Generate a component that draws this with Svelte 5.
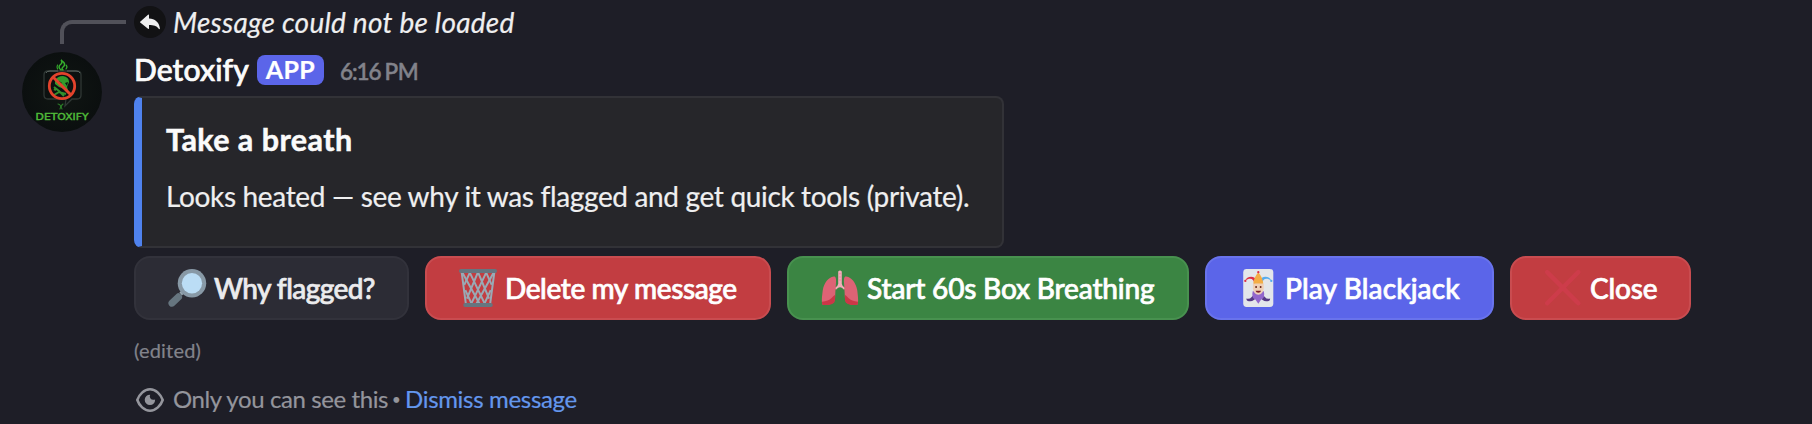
<script>
  const buttons = [
    { label: 'Why flagged?', kind: 'secondary', icon: 'search', width: 275, spacing: -0.58 },
    { label: 'Delete my message', kind: 'danger', icon: 'basket', width: 346, spacing: -0.4 },
    { label: 'Start 60s Box Breathing', kind: 'success', icon: 'lungs', width: 402, spacing: -0.18 },
    { label: 'Play Blackjack', kind: 'primary', icon: 'joker', width: 289, spacing: 0.12 },
    { label: 'Close', kind: 'danger', icon: 'cross', width: 181, spacing: -0.2 }
  ];
</script>

<article class="message">
  <div class="gutter">
    <div class="spine"></div>
    <svg class="avatar" viewBox="0 0 80 80" role="img" aria-label="Detoxify">
      <defs>
        <radialGradient id="face"><stop offset="0" stop-color="#101613" /><stop offset="1" stop-color="#0b0f0f" /></radialGradient>
      </defs>
      <circle cx="40" cy="40" r="40" fill="url(#face)" />
      <path d="M26 19h29q4 0 4 4v20q0 4-4 4h-5l-7 7 1-7H26q-4 0-4-4V23q0-4 4-4z" fill="#0c1110" stroke="#303835" stroke-width="1.3" />
      <path d="M24 21q1-2 4-2h8m9 0h9q3 0 4 2" fill="none" stroke="#69746f" stroke-width=".8" />
      <g fill="none" stroke="#35ad2d" stroke-linecap="round">
        <path d="M39 18q-4-3 0-6 2-2 0-4 6 4 2 7-2 2 0 3" stroke-width="1.5" />
        <path d="M35.500 17q-1-2 0-4M44 17q2-2 0-4" stroke-width="1.1" />
        <path d="M36 52q4 1 2 5m3-5q-3 2-1 5" stroke-width="1.1" stroke="#2b7d27" />
      </g>
      <path d="M33 29q2-5 8-5 6 1 6 6l-2 5 1 3-4-1-5-2-4-3z" fill="#329b2b" />
      <path d="M37 29l3 2-3 2zM43 31l3-1-1 4z" fill="#0c1711" />
      <path d="M32 35l5 4 5 5M32 43l5-3 7 2M34 38l-2-1" stroke="#338f2c" stroke-width="2" fill="none" />
      <circle cx="40" cy="34" r="12.700" fill="none" stroke="#e2432c" stroke-width="2.800" />
      <path d="M31 25l18 18" stroke="#e2432c" stroke-width="3" />
      <text x="13.600" y="68" textLength="53" lengthAdjust="spacingAndGlyphs">DETOXIFY</text>
    </svg>
  </div>

  <div class="content">
    <div class="reply">
      <span class="reply-icon">
        <svg viewBox="0 0 32 32"><path d="M6.200 15.800L14 8.700q1-.8 1 .5v3.300c6 .4 10 3.400 10.900 9.800.1 1-.7 1.100-1.200.4-2.200-3-5-3.700-9.700-3.700v3.300q0 1.300-1 .5L6.200 16.400q-.4-.3 0-.6z" fill="#efeff0" /></svg>
      </span>
      <em>Message could not be loaded</em>
    </div>

    <header>
      <span class="name">Detoxify</span>
      <span class="badge">APP</span>
      <time><span>6:16</span><span class="pm">PM</span></time>
    </header>

    <section class="embed">
      <h3>Take a breath</h3>
      <p>Looks heated — see why it was flagged and get quick tools (private).</p>
    </section>

    <div class="actions">
      {#each buttons as b}
        <button class={b.kind} style:width="{b.width}px">
          <svg class="emoji" viewBox="0 0 36 36">
            {#if b.icon === 'search'}
              <path d="M10.800 22.200l3-2.600 2.400 2.400-3 3z" fill="#9aaab4" />
              <path d="M1.300 34.700q-2.200-2.500.2-4.900l6.800-6.400q1.500-1.200 3.400.1l1.300 1.400q1.200 1.700 0 3.200l-6.700 6.500q-2.600 2.400-5 .1z" fill="#66757f" />
              <circle cx="22.700" cy="13.500" r="13.500" fill="#8899a6" />
              <circle cx="22.700" cy="13.500" r="9.600" fill="#bbddf5" />
            {:else if b.icon === 'basket'}
              <g fill="none" stroke="#99aab5" stroke-width="1.900">
                <path d="M2.500 3l4 30M33.500 3l-4 30" />
                <path d="M3 3l16.500 30M10 3l14.500 30M18 3l10.500 25M25.500 3L31 15" />
                <path d="M33 3L16.500 33M26 3L11.500 33M18 3L7.500 28M10.500 3L5 15" />
                <path d="M6 20l6 13M30 20l-6 13" />
              </g>
              <rect x="0" y="0" width="36" height="3.800" rx="1.900" fill="#66757f" />
              <rect x="4" y="32.200" width="28" height="3.800" rx="1.900" fill="#66757f" />
            {:else if b.icon === 'lungs'}
              <path d="M16.300 2.400q1.700-2 3.400 0V14q0 2 3.300 4l-1.100 1.600q-2.400-2.200-3.900-2.200t-3.900 2.200L13 18q3.300-2 3.300-4z" fill="#f4abba" />
              <path d="M16.500 4.500h3M16.500 7.500h3M16.500 10.500h3" stroke="#ea8fa2" stroke-width="1" />
              <path d="M12 7.200c2-.5 2.500 2 2.200 6-.3 4-.6 9-.9 15C13 34 5 34.500 2 34c-2-.4-1-8.500-.3-14C3 13 7 8 12 7.200zM24 7.200c-2-.5-2.500 2-2.200 6 .3 4 .6 9 .9 15 .3 5.800 8.300 6.300 11.300 5.800 2-.4 1-8.500.3-14C33 13 29 8 24 7.200z" fill="#dd6375" />
              <path d="M1 31q6-.3 9-3.500 2-2 3.500-3L13.200 30q-.6 4.500-11 4.200Q.7 34 1 31zM35 31q-6-.3-9-3.500-2-2-3.500-3l.3 5.500q.6 4.500 11 4.200Q35.300 34 35 31z" fill="#cc3747" />
            {:else if b.icon === 'joker'}
              <rect x="4" y="0" width="28.500" height="36" rx="3.200" fill="#e3e6ea" />
              <path d="M14.500 14C14.500 10 11 7.500 6 11c1-4 9-6 11 1z" fill="#dd2e44" />
              <path d="M22 14c0-4 3.500-6.500 8.500-3-1-4-9-6-11 1z" fill="#55acee" />
              <path d="M13.500 14Q14 8 18.300 3q4.200 5 4.700 11z" fill="#f4ad45" />
              <circle cx="18.300" cy="3" r="1.100" fill="#dd2e44" /><circle cx="6" cy="11.300" r="1.100" fill="#dd2e44" /><circle cx="30.600" cy="11.300" r="1.100" fill="#55acee" />
              <path d="M17 26q-3 5-7 4.500-3 .3-3-2.500 3 1 5-1.500l2-2zM19.500 26q3 5 7 4.500 3 .3 3-2.500-3 1-5-1.500l-2-2z" fill="#553986" />
              <path d="M13 21h10.500q1.500 6-2.500 8l-2.700 4-2.800-4q-4-2-2.500-8z" fill="#9266cc" />
              <path d="M13.200 14h10.200v5q-.8 5-5.100 5.500-4.300-.5-5.100-5.500z" fill="#efd0b8" />
              <circle cx="16.200" cy="17" r=".9" fill="#662113" /><circle cx="20.500" cy="17" r=".9" fill="#662113" />
              <path d="M15.700 20.500h5.200q-.4 2-2.600 2t-2.600-2z" fill="#7c1e28" />
            {:else}
              <path d="M3 3l29.500 29.500M32.500 3L3 32.500" stroke="#cd3c4a" stroke-width="4.200" stroke-linecap="round" />
            {/if}
          </svg>
          <span style:letter-spacing="{b.spacing}px">{b.label}</span>
        </button>
      {/each}
    </div>

    <div class="edited">(edited)</div>

    <footer>
      <svg class="eye" viewBox="0 0 28 24">
        <path d="M1.300 12C3.200 6.500 8 1.300 14 1.300S24.800 6.500 26.700 12C24.800 17.500 20 22.700 14 22.700S3.200 17.500 1.300 12z" fill="none" stroke="#94959c" stroke-width="2.600" stroke-linejoin="round" />
        <path d="M14.200 6.700q-.9 1.500.1 3.500 1.500 2.300 4.800 1.400A5.200 5.200 0 1 1 14.200 6.700z" fill="#94959c" />
      </svg>
      <span class="note">Only you can see this</span>
      <span class="dot">•</span>
      <a href="#dismiss">Dismiss message</a>
    </footer>
  </div>
</article>

<style>
  :global(body) { background: #1e1e27; }
  .message {
    display: flex;
    height: 424px;
    overflow: hidden;
    font-family: Lato, "Open Sans", sans-serif;
    white-space: nowrap;
    color: #efeff0;
    -webkit-text-stroke: 0.2px currentColor;
  }
  .gutter { width: 112px; padding-left: 22px; flex: none; }
  .spine {
    box-sizing: border-box;
    width: 66px;
    height: 24px;
    margin: 20px 0 8px 38px;
    border: solid #515159;
    border-width: 4px 0 0 4px;
    border-top-left-radius: 12px;
  }
  .avatar { display: block; width: 80px; height: 80px; }
  .avatar text { font: 400 8.500px "DejaVu Sans", sans-serif; fill: #50ba39; stroke: #50ba39; stroke-width: 0.4px; }
  .content { display: flex; flex-direction: column; align-items: flex-start; }
  .reply { display: flex; align-items: center; height: 44px; gap: 7px; }
  .reply-icon { width: 32px; height: 32px; border-radius: 50%; background: #121214; }
  .reply-icon svg { display: block; }
  .reply em { font-size: 28px; line-height: 34px; letter-spacing: 0.24px; padding-bottom: 1px; }
  header { display: flex; align-items: center; height: 52px; }
  .name { font-size: 30px; font-weight: 500; line-height: 36px; color: #fbfbfb; padding-bottom: 2px; width: 123px; letter-spacing: 0.1px; -webkit-text-stroke-width: 0.7px; }
  .badge {
    box-sizing: border-box;
    width: 67px;
    height: 30px;
    border-radius: 8px;
    background: #5b65e9;
    color: #fff;
    font-size: 25px;
    font-weight: 700;
    line-height: 29px;
    letter-spacing: 0.4px;
    text-align: center;
  }
  time { display: flex; gap: 4px; margin-left: 16px; padding-top: 4px; font-size: 22.500px; font-weight: 500; line-height: 28px; color: #82838b; letter-spacing: -1.1px; -webkit-text-stroke-width: 0.5px; }
  .pm { letter-spacing: -0.4px; }
  .embed {
    box-sizing: border-box;
    width: 870px;
    height: 152px;
    padding: 23px 22px 0 24px;
    border: 2px solid #323237;
    border-left: 8px solid #4f82ee;
    border-radius: 8px;
    background: #26262a;
  }
  h3 { margin: 0 0 19px; font-size: 30.500px; line-height: 36px; font-weight: 700; letter-spacing: 0.45px; color: #fbfbfb; -webkit-text-stroke-width: 0.5px; }
  p { margin: 0; font-size: 28px; line-height: 40px; letter-spacing: -0.34px; }
  .actions { display: flex; gap: 16px; margin-top: 8px; }
  button {
    box-sizing: border-box;
    display: flex;
    align-items: center;
    gap: 8px;
    height: 64px;
    padding: 0 0 0 32px;
    border: 2px solid;
    border-radius: 16px;
    color: #fff;
    font: 500 28px/34px Lato, "Open Sans", sans-serif;
    -webkit-text-stroke: 0.7px currentColor;
  }
  button span { padding-bottom: 1px; }
  .emoji { width: 38px; height: 38px; flex: none; overflow: visible; }
  .secondary { background: #2c2c35; border-color: #32323b; color: #ebebed; }
  .danger { background: #c23d41; border-color: #c94c50; }
  .success { background: #3b8543; border-color: #48914f; }
  .primary { background: #5b65e9; border-color: #6973ec; }
  .edited { margin-top: 18px; font-size: 20px; line-height: 24px; letter-spacing: 0.2px; color: #82838b; }
  footer { display: flex; align-items: center; margin-top: 21px; font-size: 24px; line-height: 32px; color: #94959c; }
  .eye { width: 28px; height: 24px; margin: 2px 9px 0 2px; overflow: visible; }
  .note { width: 219px; letter-spacing: -0.4px; }
  .dot { width: 13px; font-size: 15px; }
  a { color: #6497ed; text-decoration: none; letter-spacing: -0.32px; }
</style>
